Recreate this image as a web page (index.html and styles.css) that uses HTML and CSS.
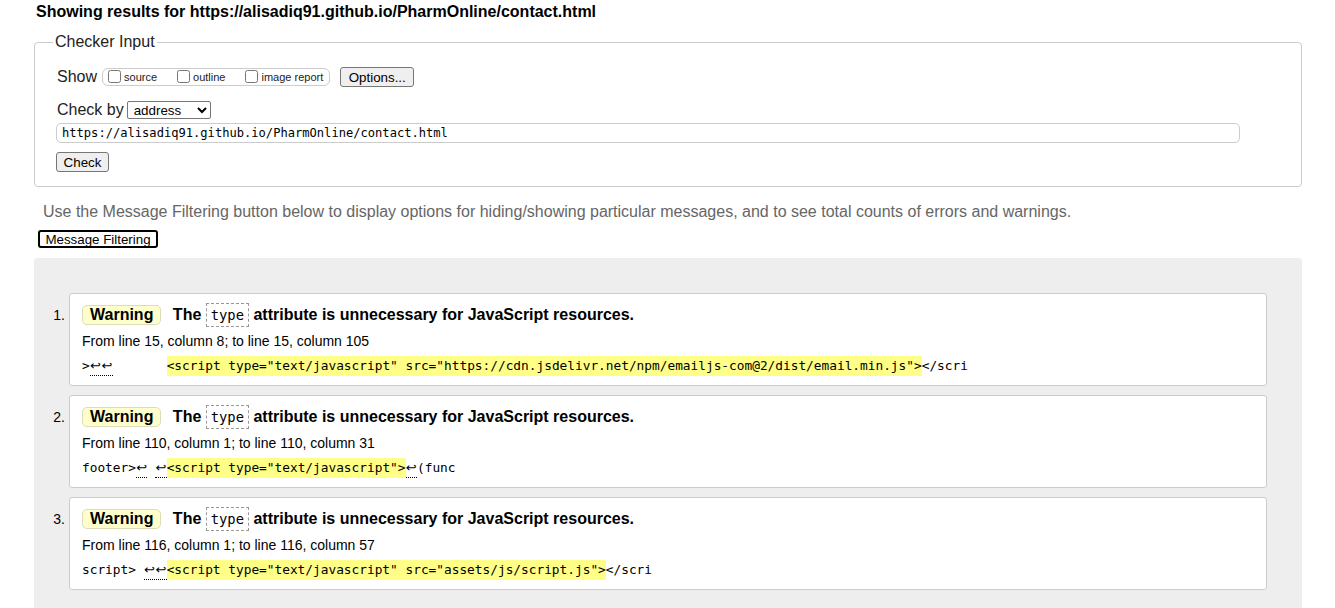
FILE: index.html
```html
<!DOCTYPE html>
<html lang="en">
<head>
<meta charset="utf-8">
<title>Showing results for https://alisadiq91.github.io/PharmOnline/contact.html - Nu Html Checker</title>
<link rel="stylesheet" href="styles.css">
</head>
<body>
<div class="page">
  <h2 class="results-title">Showing results for https://alisadiq91.github.io/PharmOnline/contact.html</h2>
  <form class="checker-form" onsubmit="return false">
    <fieldset class="checker">
      <legend>Checker Input</legend>
      <div class="row row-show">
        <span class="row-label">Show</span>
        <span class="show-opts">
          <label class="opt"><input type="checkbox">source</label>
          <label class="opt"><input type="checkbox">outline</label>
          <label class="opt opt-last"><input type="checkbox">image report</label>
        </span>
        <button type="button" class="btn btn-options">Options...</button>
      </div>
      <div class="row row-by">
        <span class="row-label">Check by</span>
        <select class="by-select">
          <option>address</option>
          <option>file upload</option>
          <option>text input</option>
        </select>
      </div>
      <input class="url-input" type="url" value="https://alisadiq91.github.io/PharmOnline/contact.html">
      <button type="button" class="btn btn-check">Check</button>
    </fieldset>
  </form>
  <p class="filter-note">Use the Message Filtering button below to display options for hiding/showing particular messages, and to see total counts of errors and warnings.</p>
  <button type="button" class="btn-filter">Message Filtering</button>
  <div class="results">
    <ol class="messages">
      <li class="msg">
        <span class="num">1.</span>
        <div class="card">
          <p class="msg-head"><strong class="badge">Warning</strong> <span class="msg-text">The <code class="kw">type</code> attribute is unnecessary for JavaScript resources.</span></p>
          <p class="loc">From line 15, column 8; to line 15, column 105</p>
          <p class="extract"><code>&gt;<span class="ws"><span class="nl">↩</span><span class="nl">↩</span></span>       <b class="hl">&lt;script type="text/javascript" src="https://cdn.jsdelivr.net/npm/emailjs-com@2/dist/email.min.js"&gt;</b>&lt;/scri</code></p>
        </div>
      </li>
      <li class="msg">
        <span class="num">2.</span>
        <div class="card">
          <p class="msg-head"><strong class="badge">Warning</strong> <span class="msg-text">The <code class="kw">type</code> attribute is unnecessary for JavaScript resources.</span></p>
          <p class="loc">From line 110, column 1; to line 110, column 31</p>
          <p class="extract"><code>footer&gt;<span class="ws"><span class="nl">↩</span></span> <span class="ws"><span class="nl">↩</span></span><b class="hl">&lt;script type="text/javascript"&gt;</b><span class="ws"><span class="nl">↩</span></span>(func</code></p>
        </div>
      </li>
      <li class="msg">
        <span class="num">3.</span>
        <div class="card">
          <p class="msg-head"><strong class="badge">Warning</strong> <span class="msg-text">The <code class="kw">type</code> attribute is unnecessary for JavaScript resources.</span></p>
          <p class="loc">From line 116, column 1; to line 116, column 57</p>
          <p class="extract"><code>script&gt; <span class="ws"><span class="nl">↩</span><span class="nl">↩</span></span><b class="hl">&lt;script type="text/javascript" src="assets/js/script.js"&gt;</b>&lt;/scri</code></p>
        </div>
      </li>
    </ol>
  </div>
</div>
</body>
</html>
```

FILE: styles.css
```css
* {
  box-sizing: border-box;
}

html,
body {
  margin: 0;
  padding: 0;
  background: #fff;
}

body {
  font-family: "Liberation Sans", Arial, sans-serif;
  font-size: 16px;
  color: #000;
}

.page {
  padding: 0 33px 0 34px;
}

.results-title {
  font-size: 16px;
  font-weight: bold;
  line-height: 18px;
  margin: 3px 0 0 2px;
}

.checker-form {
  margin: 12px 0 0;
}

.checker {
  margin: 0;
  padding: 0 61px 14px 21px;
  border: 1px solid #ccc;
  border-radius: 4px;
  min-width: 0;
}

.checker legend {
  margin-left: -3px;
  padding: 0 2px;
  font-size: 16px;
  line-height: 18px;
  color: #222;
}

.row {
  display: flex;
  align-items: center;
}

.row-show {
  height: 22px;
  margin-top: 15px;
}

.row-by {
  height: 20px;
  margin-top: 12px;
}

.row-label {
  line-height: 18px;
  color: #222;
  margin-left: 1px;
}

.show-opts {
  display: inline-flex;
  align-items: center;
  height: 18px;
  margin-left: 5px;
  padding: 0 6px 0 1px;
  border: 1px solid #ccc;
  border-radius: 6px;
  font-size: 11px;
  color: #222;
}

.opt {
  display: inline-flex;
  align-items: center;
  margin-right: 16px;
}

.opt-last {
  margin-right: 0;
}

.opt input {
  width: 13px;
  height: 13px;
  margin: 0 3px 1px 4px;
}

.btn {
  height: 20px;
  padding: 0;
  background: #efefef;
  border: 1px solid #767676;
  border-radius: 3px;
  font-family: "Liberation Sans", Arial, sans-serif;
  font-size: 13.33px;
  color: #000;
  text-align: center;
}

.btn-options {
  width: 74px;
  margin-left: 10px;
}

.by-select {
  width: 84px;
  height: 18px;
  margin-left: 3px;
  padding: 0 0 0 2px;
  font-family: "Liberation Sans", Arial, sans-serif;
  font-size: 13.33px;
  color: #000;
  background: #fff;
  border: 1px solid #767676;
  border-radius: 2px;
}

.url-input {
  display: block;
  width: 100%;
  height: 20px;
  margin: 3px 0 0;
  padding: 0 5px;
  border: 1px solid #ccc;
  border-radius: 5px;
  font-family: "DejaVu Sans Mono", "Liberation Mono", monospace;
  font-size: 12.1px;
  color: #000;
}

.btn-check {
  display: block;
  width: 53px;
  margin-top: 9px;
}

.filter-note {
  margin: 16px 0 0 9px;
  line-height: 18px;
  color: #666;
}

.btn-filter {
  display: block;
  width: 120px;
  height: 18px;
  margin: 9px 0 0 4px;
  padding: 0;
  background: #fff;
  border: 2px solid #000;
  border-radius: 3px;
  font-family: "Liberation Sans", Arial, sans-serif;
  font-size: 13.33px;
  color: #000;
}

.results {
  margin-top: 10px;
  padding: 35px 35px 35px 0;
  background: #eee;
  border-radius: 4px;
}

.messages {
  margin: 0;
  padding: 0;
  list-style: none;
}

.msg {
  display: flex;
  align-items: baseline;
  margin-bottom: 9px;
}

.num {
  flex: 0 0 35px;
  padding-right: 4px;
  text-align: right;
  font-size: 14px;
}

.card {
  flex: 1;
  min-width: 0;
  padding: 7px 12px 9px;
  background: #fff;
  border: 1px solid #ccc;
  border-radius: 3px;
}

.card p {
  margin: 0;
}

.msg-head {
  height: 27px;
  line-height: 27px;
  font-weight: bold;
}

.badge {
  display: inline-block;
  line-height: 18px;
  padding: 0 7px;
  margin-right: 7px;
  background: #ffc;
  border: 1px solid #dddcb8;
  border-radius: 5px;
}

.kw {
  font-family: "DejaVu Sans Mono", "Liberation Mono", monospace;
  font-weight: normal;
  font-size: 13.8px;
  line-height: 1;
  padding: 3px 4px;
  border: 1px dashed #999;
}

.loc {
  margin-top: 5px !important;
  height: 16px;
  font-size: 14px;
  line-height: 16px;
}

.extract {
  margin-top: 7px !important;
  height: 20px;
  font-family: "DejaVu Sans Mono", "Liberation Mono", monospace;
  font-size: 12.8px;
  line-height: 20px;
  white-space: pre;
}

.extract code {
  font-family: inherit;
  font-size: inherit;
}

.hl {
  display: inline-block;
  vertical-align: top;
  line-height: 20px;
  font-weight: normal;
  background: #ff8;
}

.ws {
  display: inline-block;
  vertical-align: top;
  height: 20px;
  border-bottom: 1px dotted #000;
}

.nl {
  display: inline-block;
  vertical-align: top;
  width: 11.5px;
  line-height: 19px;
  text-align: center;
  font-family: "DejaVu Sans", sans-serif;
  font-size: 13px;
}
```
